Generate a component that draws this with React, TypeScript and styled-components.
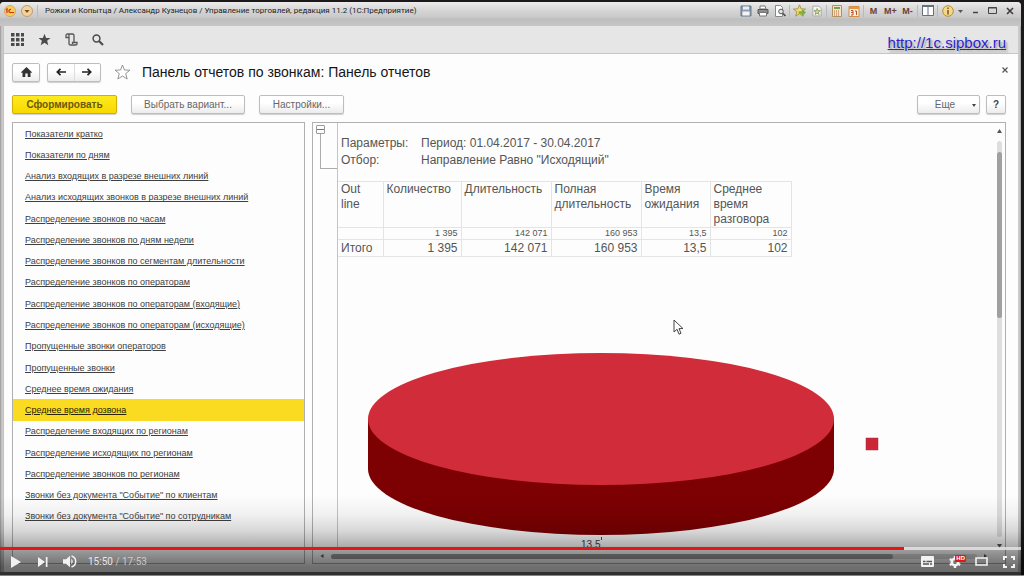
import React from 'react';
import styled, { createGlobalStyle, css } from 'styled-components';

const GlobalStyle = createGlobalStyle`
  * { box-sizing: border-box; }
  body { margin: 0; background: #000; font-family: "Liberation Sans", Arial, sans-serif; }
  button, input { font-family: inherit; margin: 0; padding: 0; border: 0; background: none; }
  a { color: inherit; }
  svg { display: block; }
`;

/* ---------- Player shell ---------- */

const Player = styled.main`
  position: relative;
  display: flex;
  flex-direction: column;
  min-height: 100vh;
  padding: 2px 3px 0 0;
  border-bottom: 2px solid #858585;
  background: #1d181a;
  overflow: hidden;
`;

const AppWindow = styled.div`
  flex: 1;
  display: flex;
  flex-direction: column;
  background: linear-gradient(90deg, #9a9494 0, #d0d0d0 2px, #bdbdbd 4px, #bdbdbd calc(100% - 3px), #d8d8d8 calc(100% - 2px), #9c9c9c 100%);
  border-bottom: 3px solid #707070;
  border-radius: 4px 4px 0 0;
`;

/* ---------- Title bar ---------- */

const TitleBar = styled.header`
  display: flex;
  align-items: flex-start;
  height: 24px;
  padding: 0 5px 0 4px;
  border-radius: 4px 4px 0 0;
  background: linear-gradient(180deg, #ececec 0, #d6d6d6 8px, #cacaca 15px, #bebebe 17px, #c6c6c6 24px);
`;

const TitleTools = styled.div`
  display: flex;
  align-items: center;
  gap: ${(p: { $gap?: number }) => p.$gap ?? 4}px;
  height: 17px;
`;

const ToolButton = styled.button`
  display: flex;
  align-items: center;
  justify-content: center;
  height: 14px;
  min-width: 13px;
  font-size: 9px;
  line-height: 14px;
  font-weight: 700;
  color: #6b4034;
`;

const Separator = styled.span`
  width: 1px;
  height: 12px;
  margin: 0 -1px;
  background: #b9b9b9;
`;

const InfoMenu = styled.div`
  display: flex;
  align-items: center;
  gap: 4px;
  margin-right: 2px;
`;

const WindowTitle = styled.h1`
  flex: 1;
  margin: 0 0 0 8px;
  font-family: Roboto, sans-serif;
  font-size: 8px;
  line-height: 17px;
  font-weight: 400;
  color: #222;
  white-space: nowrap;
`;

/* ---------- Workspace ---------- */

const Workspace = styled.div`
  flex: 1;
  display: flex;
  flex-direction: column;
  margin: 0 3px 0 4px;
  background: #fdfdfd;
`;

const SectionBar = styled.nav`
  display: flex;
  align-items: center;
  gap: 11px;
  height: 28px;
  padding: 0 12px 0 5px;
  border-bottom: 1px solid #c6c6c6;
  background: #e6e6e7;
`;

const SectionButton = styled.button`
  display: flex;
  align-items: center;
  justify-content: center;
  width: 16px;
  height: 20px;
`;

const SiteLink = styled.a`
  margin-left: auto;
  padding-top: 6px;
  font-size: 15px;
  line-height: 20px;
  color: #2b1fd0;
  text-shadow: 2px 2px 2px #9a9a9a;
`;

const PageHeader = styled.div`
  display: flex;
  align-items: center;
  height: 36px;
  padding: 0 9px 0 8px;
`;

const buttonFace = css`
  border: 1px solid #bdbdbd;
  border-radius: 2px;
  background: linear-gradient(180deg, #ffffff 40%, #ececec 100%);
  box-shadow: 0 1px 1px #d0d0d0;
`;

const HomeButton = styled.button`
  ${buttonFace}
  display: flex;
  align-items: center;
  justify-content: center;
  width: 28px;
  height: 19px;
`;

const NavGroup = styled.div`
  ${buttonFace}
  display: flex;
  width: 54px;
  height: 19px;
  margin: 0 13px 0 7px;
`;

const NavButton = styled.button`
  flex: 1;
  display: flex;
  align-items: center;
  justify-content: center;
  & + & { border-left: 1px solid #dddddd; }
`;

const IconButton = styled.button`
  display: flex;
  align-items: center;
  justify-content: center;
`;

const PageTitle = styled.h2`
  flex: 1;
  margin: 0 0 0 11px;
  font-size: 14px;
  line-height: 20px;
  font-weight: 400;
  color: #151515;
`;

const CloseButton = styled(IconButton)`
  width: 9px;
  height: 9px;
  margin-bottom: 5px;
`;

const CommandBar = styled.div`
  display: flex;
  gap: 14px;
  padding: 5px 12px 8px 8px;
`;

const CommandButton = styled.button<{ $width: number; $primary?: boolean; $end?: boolean }>`
  ${buttonFace}
  display: flex;
  align-items: center;
  justify-content: center;
  width: ${p => p.$width}px;
  height: 19px;
  margin-left: ${p => (p.$end ? 'auto' : '0')};
  font-size: 10px;
  line-height: 16px;
  color: #666;
  white-space: nowrap;
  ${p => p.$primary && css`
    border-color: #d0b000;
    background: linear-gradient(180deg, #ffea1e, #f7d800);
    font-weight: 700;
    color: #6a5a10;
  `}
`;

const HelpButton = styled(CommandButton)`
  margin-left: -8px;
  font-weight: 700;
  color: #444;
`;

const Caret = styled.span`
  margin: 2px -14px 0 17px;
  border: 2px solid transparent;
  border-top: 3px solid #444;
  border-bottom: 0;
`;

/* ---------- Panels ---------- */

const Panels = styled.div`
  flex: 1;
  display: flex;
  gap: 7px;
  padding: 0 12px 8px 8px;
`;

const ReportList = styled.ul`
  flex: 0 0 293px;
  display: grid;
  grid-auto-rows: 1fr;
  margin: 0;
  padding: 0 0 36px;
  border: 1px solid #b0b0b0;
  list-style: none;
`;

const ReportItem = styled.li<{ $selected: boolean }>`
  display: flex;
  align-items: center;
  padding-left: 12px;
  font-size: 9px;
  line-height: 12px;
  color: ${p => (p.$selected ? '#2c2400' : '#404040')};
  background: ${p => (p.$selected ? '#fbdb21' : 'transparent')};
  white-space: nowrap;
`;

const Report = styled.section`
  flex: 1;
  min-width: 0;
  display: flex;
  flex-direction: column;
  border: 1px solid #b0b0b0;
`;

const ReportMain = styled.div`
  flex: 1;
  display: flex;
`;

const Outline = styled.div`
  flex: 0 0 25px;
  padding: 2px 0 0 3px;
  border-right: 1px solid #c4c4c4;
`;

const CollapseButton = styled.button`
  display: block;
  width: 9px;
  height: 9px;
  border: 1px solid #9c9c9c;
  border-radius: 1px;
  background: linear-gradient(#777, #777) center / 7px 1px no-repeat;
`;

const Bracket = styled.div`
  height: 35px;
  margin-left: 4px;
  border: solid #ababab;
  border-width: 0 0 1px 1px;
`;

const Sheet = styled.div`
  flex: 1;
  min-width: 0;
  display: flex;
  flex-direction: column;
  color: #555;
  font-size: 12px;
`;

const Params = styled.dl`
  display: grid;
  grid-template-columns: 80px 1fr;
  margin: 0;
  padding: 12px 0 12px 3px;
  line-height: 17px;
  dd { margin: 0; }
`;

const DataTable = styled.table`
  table-layout: fixed;
  width: 453px;
  border-collapse: collapse;
  line-height: 15px;
  th, td { border: 1px solid #e4e4e4; padding: 0 3px; }
  tr > :first-child { border-left: 0; }
  th { height: 46px; font-weight: 400; text-align: left; vertical-align: top; }
  td { height: 17px; text-align: right; }
`;

const DetailRow = styled.tr`
  font-size: 9px;
  line-height: 11px;
  && td { height: 12px; }
`;

const LabelCell = styled.td`
  && { text-align: left; }
`;

const ChartArea = styled.div`
  padding: 87px 0 0 22px;
`;

const VScroll = styled.div`
  flex: 0 0 11px;
  display: flex;
  flex-direction: column;
  align-items: center;
  padding: 6px 0 1px 0;
`;

const Track = styled.div`
  flex: 1;
  width: 5px;
  margin: 8px 0 7px;
  padding-top: 11px;
  border-radius: 3px;
  background: #dedede;
`;

const Thumb = styled.div`
  height: 166px;
  border-radius: 3px;
  background: #a0a0a0;
`;

const HScroll = styled.div`
  display: flex;
  align-items: center;
  gap: 6px;
  height: 14px;
  padding: 0 17px 0 7px;
`;

const HTrack = styled.div`
  flex: 1;
  height: 5px;
  border-radius: 3px;
  background: #dcdcdc;
`;

const HThumb = styled.div`
  width: 87%;
  height: 5px;
  border-radius: 3px;
  background: #9c9c9c;
`;

const Pointer = styled.svg`
  position: absolute;
  left: 673px;
  top: 319px;
`;

/* ---------- Player controls ---------- */

const Controls = styled.div`
  position: absolute;
  inset: auto 0 0 0;
  display: flex;
  flex-direction: column;
  padding: 66px 3px 0 0;
  background: linear-gradient(180deg, transparent 14px, rgba(0, 0, 0, 0.05) 34px, rgba(0, 0, 0, 0.15) 50px, rgba(0, 0, 0, 0.3) 64px, rgba(0, 0, 0, 0.42) 72px, rgba(0, 0, 0, 0.56) 86px, rgba(0, 0, 0, 0.58) 100%);
`;

const Seek = styled.input`
  appearance: none;
  width: 100%;
  height: 3px;
  background: linear-gradient(90deg, #e81414 88.5%, rgba(235, 235, 235, 0.75) 88.5%);
  &::-webkit-slider-thumb { appearance: none; width: 0; height: 0; }
`;

const ControlRow = styled.div`
  display: flex;
  align-items: center;
  gap: 12px;
  height: 25px;
  padding: 0 5px 2px 8px;
`;

const ControlButton = styled.button`
  display: flex;
  align-items: center;
  justify-content: center;
  width: 15px;
  height: 20px;
`;

const Time = styled.span`
  flex: 1;
  margin-left: -1px;
  font-family: Roboto, sans-serif;
  font-size: 10px;
  line-height: 14px;
  color: #e8e8e8;
  span { color: #c9c9c9; }
`;

const SettingsButton = styled(ControlButton)`
  position: relative;
`;

const HdBadge = styled.span`
  position: absolute;
  right: -4px;
  top: 3px;
  padding: 0 1px;
  border-radius: 1px;
  background: #e01818;
  font-size: 6px;
  line-height: 7px;
  font-weight: 700;
  color: #fff;
`;

const reports = [
  'Показатели кратко',
  'Показатели по дням',
  'Анализ входящих в разрезе внешних линий',
  'Анализ исходящих звонков в разрезе внешних линий',
  'Распределение звонков по часам',
  'Распределение звонков по дням недели',
  'Распределение звонков по сегментам длительности',
  'Распределение звонков по операторам',
  'Распределение звонков по операторам (входящие)',
  'Распределение звонков по операторам (исходящие)',
  'Пропущенные звонки операторов',
  'Пропущенные звонки',
  'Среднее время ожидания',
  'Среднее время дозвона',
  'Распределение входящих по регионам',
  'Распределение исходящих по регионам',
  'Распределение звонков по регионам',
  'Звонки без документа "Событие" по клиентам',
  'Звонки без документа "Событие" по сотрудникам',
];

const columns = [
  { name: 'Out line', width: 45, value: '', total: 'Итого' },
  { name: 'Количество', width: 78, value: '1 395', total: '1 395' },
  { name: 'Длительность', width: 90, value: '142 071', total: '142 071' },
  { name: 'Полная длительность', width: 90, value: '160 953', total: '160 953' },
  { name: 'Время ожидания', width: 69, value: '13,5', total: '13,5' },
  { name: 'Среднее время разговора', width: 81, value: '102', total: '102' },
];

const starPath = 'M8 1 L10 6 L15.4 6.2 L11.2 9.6 L12.7 15 L8 12 L3.3 15 L4.8 9.6 L0.6 6.2 L6 6 Z';

const Arrow = ({ d }: { d: string }) => (
  <svg width="5" height="4" viewBox="0 0 5 4" fill="#555"><path d={d} /></svg>
);

const TitleIcons = () => (
  <TitleTools>
    <ToolButton aria-label="Сохранить">
      <svg width="12" height="12" viewBox="0 0 12 12">
        <path d="M1 1h10v10H1z" fill="#8b9db0" stroke="#65778b" />
        <path d="M3 1.5h6v3H3z" fill="#e8eef4" /><path d="M2.5 6.5h7v4h-7z" fill="#f4f4f4" />
      </svg>
    </ToolButton>
    <ToolButton aria-label="Печать">
      <svg width="12" height="12" viewBox="0 0 12 12">
        <path d="M3 1h5l1 3H3z" fill="#fff" stroke="#777" />
        <path d="M1 4.5h10v4H1z" fill="#8d8d8d" stroke="#555" />
        <path d="M2.5 7.5h7v3.5h-7z" fill="#fff" stroke="#777" />
      </svg>
    </ToolButton>
    <ToolButton aria-label="Просмотр">
      <svg width="12" height="12" viewBox="0 0 12 12" fill="none">
        <path d="M1.5 .5h5l2 2v9h-7z" fill="#fff" stroke="#888" />
        <circle cx="7" cy="6.5" r="2.3" fill="#dce8ee" stroke="#555" /><path d="M9 8.500l2.500 2.500" stroke="#444" strokeWidth="1.500" />
      </svg>
    </ToolButton>
    <Separator />
    <ToolButton aria-label="В избранное">
      <svg width="13" height="13" viewBox="0 0 16 16">
        <path d={starPath} fill="#f4dc6e" stroke="#a08a3a" /><path d="M7 9h4V6l5 4.500-5 4.500v-3H7z" fill="#73b33d" />
      </svg>
    </ToolButton>
    <ToolButton aria-label="Избранное">
      <svg width="12" height="12" viewBox="0 0 16 16">
        <path d="M2.500 1.500h8l3 3v10h-11z" fill="#f7f7f0" stroke="#999" />
        <path d={starPath} transform="translate(3.500 4) scale(.58)" fill="#cbd88c" stroke="#7b8950" strokeWidth="1.600" />
      </svg>
    </ToolButton>
    <Separator />
    <ToolButton aria-label="Калькулятор">
      <svg width="12" height="12" viewBox="0 0 12 12">
        <path d="M1.500.5h9v11h-9z" fill="#f3e3c4" stroke="#b39262" /><path d="M3 2h6v2H3z" fill="#6fa253" />
        <path d="M3 6h6M3 8h6M3 10h6" stroke="#c06a3c" strokeDasharray="1 1" />
      </svg>
    </ToolButton>
    <ToolButton aria-label="Календарь">
      <svg width="12" height="12" viewBox="0 0 12 12" fill="none">
        <path d="M1 1.500h10v10H1z" fill="#fbefdc" stroke="#d08d4e" /><path d="M1 2h10v2H1z" fill="#ec9440" />
        <path d="M3 5.500h2v4.500H3M3 7.500h2M7 6h1.500v4" stroke="#b5532c" />
      </svg>
    </ToolButton>
    <Separator />
    <ToolButton>M</ToolButton>
    <ToolButton>M+</ToolButton>
    <ToolButton>M-</ToolButton>
    <Separator />
    <ToolButton aria-label="Окна">
      <svg width="12" height="11" viewBox="0 0 12 11" fill="#fff" stroke="#666f7c">
        <path d="M.5.5h11v10H.5zM6 1v9" /><path d="M0 1h12" strokeWidth="2" />
      </svg>
    </ToolButton>
    <Separator />
    <InfoMenu>
      <ToolButton aria-label="Информация">
        <svg width="12" height="12" viewBox="0 0 12 12">
          <circle cx="6" cy="6" r="5.300" fill="#f3d78c" stroke="#c08b32" />
          <path d="M6 5v4.500M6 2.500v1.500" stroke="#7b5715" strokeWidth="1.500" />
        </svg>
      </ToolButton>
      <Arrow d="M0 1h5L2.500 4z" />
    </InfoMenu>
    <ToolButton aria-label="Свернуть">
      <svg width="9" height="9" viewBox="0 0 9 9"><path d="M2 6.500h5" stroke="#444" strokeWidth="1.500" /></svg>
    </ToolButton>
    <ToolButton aria-label="Развернуть">
      <svg width="9" height="9" viewBox="0 0 9 9" fill="none" stroke="#444"><path d="M.5 1.500h8v6h-8zM.5 2h8" /></svg>
    </ToolButton>
    <ToolButton aria-label="Закрыть">
      <svg width="8" height="8" viewBox="0 0 8 8"><path d="M1 1l6 6M7 1L1 7" stroke="#3d3d3d" strokeWidth="1.600" /></svg>
    </ToolButton>
  </TitleTools>
);

const Chart = () => (
  <svg width="520" height="205" viewBox="0 0 520 205" overflow="visible" role="img" aria-label="Среднее время дозвона">
    <path d="M8 75v50a233 66 0 0 0 466 0V75z" fill="#7d0002" />
    <ellipse cx="241" cy="75" rx="233" ry="66" fill="#d12c39" />
    <rect x="506" y="94" width="12" height="12" fill="#cc2538" stroke="#9e3040" strokeWidth="0.500" />
    <path d="M241.500 193v3" stroke="#555" />
    <text x="221" y="204" fontSize="10" fill="#444">13,5</text>
  </svg>
);

export default function App() {
  return (
    <Player>
      <GlobalStyle />
      <AppWindow>
        <TitleBar>
          <TitleTools $gap={5}>
            <IconButton aria-label="1С">
              <svg width="12" height="12" viewBox="0 0 12 12">
                <circle cx="6" cy="6" r="5.500" fill="#f8cd58" stroke="#cb9655" strokeWidth=".7" />
                <path d="M2 5l1-1v4M7 4.500a1.600 1.600 0 1 0 0 3h3" fill="none" stroke="#cb3121" strokeWidth="1.200" />
              </svg>
            </IconButton>
            <IconButton aria-label="Меню">
              <svg width="12" height="12" viewBox="0 0 12 12">
                <circle cx="6" cy="6" r="5.500" fill="#f3d29c" stroke="#b98e58" strokeWidth=".8" />
                <path d="M3.500 5h5L6 8z" fill="#73502e" />
              </svg>
            </IconButton>
            <Separator />
          </TitleTools>
          <WindowTitle>Рожки и Копытца / Александр Кузнецов / Управление торговлей, редакция 11.2  (1С:Предприятие)</WindowTitle>
          <TitleIcons />
        </TitleBar>

        <Workspace>
          <SectionBar>
            <SectionButton aria-label="Разделы">
              <svg width="13" height="13" viewBox="0 0 13 13" fill="#4b4b4b">
                {[0, 5, 10].map(y => [0, 5, 10].map(x => <rect key={`${x}-${y}`} x={x} y={y} width="3.500" height="3.500" />))}
              </svg>
            </SectionButton>
            <SectionButton aria-label="Избранное">
              <svg width="13" height="13" viewBox="0 0 16 16" fill="#4b4b4b"><path d={starPath} /></svg>
            </SectionButton>
            <SectionButton aria-label="История">
              <svg width="13" height="13" viewBox="0 0 13 13" fill="none" stroke="#555" strokeWidth="1.300">
                <path d="M3.500 4.500H1V2.500Q1 1 2.500 1H7.500Q9 1 9 2.500V9.500H12V11Q12 12 10.500 12H5.500Q4 12 4 10.500V2.500Q4 1 2.500 1M9 9.500H7.500V11" />
              </svg>
            </SectionButton>
            <SectionButton aria-label="Поиск">
              <svg width="12" height="12" viewBox="0 0 12 12" fill="none" stroke="#4b4b4b">
                <circle cx="4.500" cy="4.500" r="3.400" strokeWidth="1.500" /><path d="M7 7l4 4" strokeWidth="2.200" />
              </svg>
            </SectionButton>
            <SiteLink href="http://1c.sipbox.ru">http://1c.sipbox.ru</SiteLink>
          </SectionBar>

          <PageHeader>
            <HomeButton aria-label="Домой">
              <svg width="11" height="10" viewBox="0 0 11 10" fill="#333"><path d="M5.500 0L11 5.200l-.8.9L9.500 5.500V10H6.700V6.500H4.300V10H1.500V5.500l-.7.6L0 5.200z" /></svg>
            </HomeButton>
            <NavGroup>
              <NavButton aria-label="Назад">
                <svg width="10" height="8" viewBox="0 0 10 8" fill="none" stroke="#222" strokeWidth="1.700"><path d="M10 4H1.500M4.500 .8L1.300 4l3.200 3.200" /></svg>
              </NavButton>
              <NavButton aria-label="Вперед">
                <svg width="10" height="8" viewBox="0 0 10 8" fill="none" stroke="#222" strokeWidth="1.700"><path d="M0 4h8.500M5.500 .8L8.700 4 5.500 7.200" /></svg>
              </NavButton>
            </NavGroup>
            <IconButton aria-label="Добавить в избранное">
              <svg width="17" height="16" viewBox="0 0 16 16" fill="#fff" stroke="#8a8a8a" strokeWidth=".9"><path d={starPath} /></svg>
            </IconButton>
            <PageTitle>Панель отчетов по звонкам: Панель отчетов</PageTitle>
            <CloseButton aria-label="Закрыть">
              <svg width="6" height="6" viewBox="0 0 6 6"><path d="M.5.5l5 5M5.500.5l-5 5" stroke="#555" strokeWidth="1.200" /></svg>
            </CloseButton>
          </PageHeader>

          <CommandBar>
            <CommandButton $width={105} $primary>Сформировать</CommandButton>
            <CommandButton $width={114}>Выбрать вариант...</CommandButton>
            <CommandButton $width={85}>Настройки...</CommandButton>
            <CommandButton $width={63} $end>Еще<Caret /></CommandButton>
            <HelpButton $width={20}>?</HelpButton>
          </CommandBar>

          <Panels>
            <ReportList>
              {reports.map(name => (
                <ReportItem key={name} $selected={name === 'Среднее время дозвона'}>
                  <a href="#report">{name}</a>
                </ReportItem>
              ))}
            </ReportList>

            <Report>
              <ReportMain>
                <Outline>
                  <CollapseButton aria-label="Свернуть группу" />
                  <Bracket />
                </Outline>
                <Sheet>
                  <Params>
                    <dt>Параметры:</dt>
                    <dd>Период: 01.04.2017 - 30.04.2017</dd>
                    <dt>Отбор:</dt>
                    <dd>Направление Равно "Исходящий"</dd>
                  </Params>
                  <DataTable>
                    <colgroup>{columns.map(c => <col key={c.name} width={c.width} />)}</colgroup>
                    <thead>
                      <tr>{columns.map(c => <th key={c.name} scope="col">{c.name}</th>)}</tr>
                    </thead>
                    <tbody>
                      <DetailRow>{columns.map(c => <td key={c.name}>{c.value}</td>)}</DetailRow>
                      <tr>
                        {columns.map((c, i) => i === 0
                          ? <LabelCell key={c.name}>{c.total}</LabelCell>
                          : <td key={c.name}>{c.total}</td>)}
                      </tr>
                    </tbody>
                  </DataTable>
                  <ChartArea><Chart /></ChartArea>
                </Sheet>
                <VScroll>
                  <Arrow d="M2.500 0L5 4H0z" />
                  <Track><Thumb /></Track>
                  <Arrow d="M0 0h5L2.500 4z" />
                </VScroll>
              </ReportMain>
              <HScroll>
                <Arrow d="M3.500 0v4L.5 2z" />
                <HTrack><HThumb /></HTrack>
                <Arrow d="M1 0v4l3-2z" />
              </HScroll>
            </Report>
          </Panels>
        </Workspace>
      </AppWindow>

      <Pointer width="11" height="17" viewBox="0 0 11 17" fill="#fff" stroke="#444" strokeWidth="1">
        <path d="M1 1v12l3-2.800 2 5 2-.9-2-4.700h4z" />
      </Pointer>

      <Controls>
        <Seek type="range" aria-label="Позиция воспроизведения" min={0} max={1073} defaultValue={950} />
        <ControlRow>
          <ControlButton aria-label="Воспроизвести">
            <svg width="10" height="12" viewBox="0 0 10 12" fill="#f2f2f2"><path d="M0 0l10 6-10 6z" /></svg>
          </ControlButton>
          <ControlButton aria-label="Следующее">
            <svg width="10" height="10" viewBox="0 0 10 10" fill="#f2f2f2"><path d="M0 0l7 5-7 5zM7.800 0H9.500v10H7.800z" /></svg>
          </ControlButton>
          <ControlButton aria-label="Звук">
            <svg width="14" height="13" viewBox="0 0 14 13" fill="#f2f2f2">
              <path d="M0 4.200h3L7 .7v11.600L3 8.800H0zM8.300 3.800a3.200 3.200 0 0 1 0 5.400z" />
              <path d="M8.500 1a5.700 5.700 0 0 1 0 11" fill="none" stroke="#f2f2f2" strokeWidth="1.500" />
            </svg>
          </ControlButton>
          <Time>15:50 <span>/ 17:53</span></Time>
          <ControlButton aria-label="Субтитры">
            <svg width="13" height="11" viewBox="0 0 13 11"><rect width="13" height="11" rx="1" fill="#f2f2f2" /><path d="M2 5.500h2.500M5.500 5.500H11M2 8h6M9 8h2" stroke="#555" strokeWidth="1.300" /></svg>
          </ControlButton>
          <SettingsButton aria-label="Настройки">
            <svg width="12" height="12" viewBox="0 0 12 12">
              <circle cx="6" cy="6" r="3.200" fill="none" stroke="#f2f2f2" strokeWidth="2.600" />
              <path d="M6 0v2.500M6 9.500V12M.8 3l2.200 1.300M9 7.700L11.200 9M.8 9L3 7.700M9 4.300L11.200 3" stroke="#f2f2f2" strokeWidth="2.400" />
            </svg>
            <HdBadge>HD</HdBadge>
          </SettingsButton>
          <ControlButton aria-label="Широкий экран">
            <svg width="13" height="9" viewBox="0 0 13 9"><path d="M1 1h11v7H1z" fill="none" stroke="#f2f2f2" strokeWidth="1.600" /></svg>
          </ControlButton>
          <ControlButton aria-label="Во весь экран">
            <svg width="12" height="12" viewBox="0 0 12 12" fill="none" stroke="#f2f2f2" strokeWidth="2"><path d="M1 4V1h3M8 1h3v3M11 8v3H8M4 11H1V8" /></svg>
          </ControlButton>
        </ControlRow>
      </Controls>
    </Player>
  );
}
